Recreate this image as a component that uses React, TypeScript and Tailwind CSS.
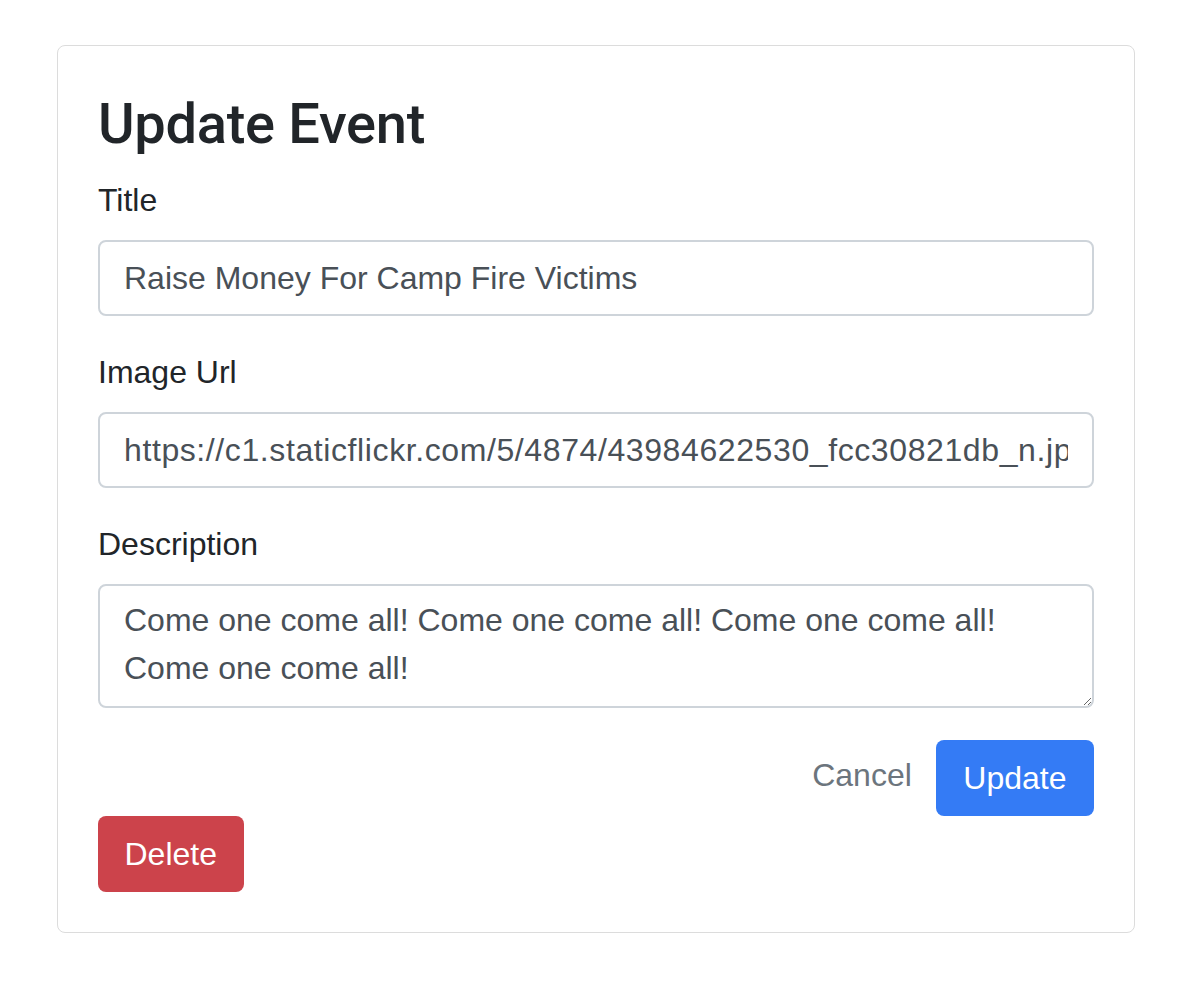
import React from 'react'

export default function App() {
  const font = { fontFamily: '"Liberation Sans", Arial, sans-serif' }

  return (
    <div className="min-h-screen bg-white pt-[45px] pl-[57px]" style={font}>
      <div className="w-[1078px] rounded-[8px] border border-[#dcdcdc] bg-white px-[40px] pt-[45px] pb-[40px]">
        <h3
          className="mb-[18px] text-[56px] leading-[1.2] font-medium tracking-[-0.3px] text-[#212529]"
          style={{ fontFamily: 'Roboto, "Liberation Sans", Arial, sans-serif' }}
        >
          Update Event
        </h3>

        <form className="flex flex-col" onSubmit={e => e.preventDefault()}>
          {/* title */}
          <div className="mb-[32px]">
            <label className="mb-[16px] block text-[32px] leading-[48px] text-[#212529]">Title</label>
            <input
              type="text"
              readOnly
              value="Raise Money For Camp Fire Victims"
              className="block h-[76px] w-full rounded-[8px] border-2 border-[#ced4da] bg-white px-[24px] text-[32px] text-[#495057] outline-none"
              style={font}
            />
          </div>

          {/* image url */}
          <div className="mb-[32px]">
            <label className="mb-[16px] block text-[32px] leading-[48px] text-[#212529]">Image Url</label>
            <input
              type="text"
              readOnly
              value="https://c1.staticflickr.com/5/4874/43984622530_fcc30821db_n.jpg"
              className="block h-[76px] w-full rounded-[8px] border-2 border-[#ced4da] bg-white px-[24px] text-[32px] tracking-[0.6px] text-[#495057] outline-none"
              style={font}
            />
          </div>

          {/* description */}
          <div className="mb-[32px]">
            <label className="mb-[16px] block text-[32px] leading-[48px] text-[#212529]">Description</label>
            <textarea
              readOnly
              rows={2}
              value="Come one come all! Come one come all! Come one come all! Come one come all!"
              className="block h-[124px] w-full rounded-[8px] border-2 border-[#ced4da] bg-white px-[24px] py-[10px] text-[32px] leading-[48px] text-[#495057] outline-none"
              style={font}
            />
          </div>

          <div className="flex items-start justify-end">
            <button
              type="button"
              className="px-[24px] pt-[11px] text-[32px] leading-[48px] text-[#6c757d]"
              style={font}
            >
              Cancel
            </button>
            <button
              type="submit"
              className="h-[76px] rounded-[8px] bg-[#347bf5] px-[27.5px] text-[32px] leading-[48px] text-white"
              style={font}
            >
              Update
            </button>
          </div>

          <div>
            <button
              type="button"
              className="h-[76px] rounded-[8px] bg-[#cc434b] px-[26.5px] text-[32px] leading-[48px] text-white"
              style={font}
            >
              Delete
            </button>
          </div>
        </form>
      </div>
    </div>
  )
}
